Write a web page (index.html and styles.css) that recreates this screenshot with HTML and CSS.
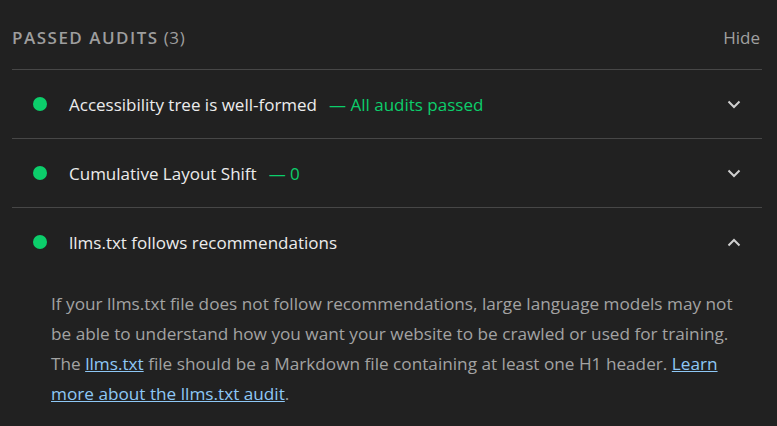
FILE: index.html
```html
<!DOCTYPE html>
<html lang="en">
<head>
<meta charset="utf-8">
<title>Passed audits</title>
<link rel="stylesheet" href="styles.css">
</head>
<body>
<section class="group">
  <header class="group-header">
    <h2 class="group-title"><span class="caps">Passed audits</span> <span class="count">(3)</span></h2>
    <button class="hide-btn" type="button">Hide</button>
  </header>
  <div class="audit">
    <div class="audit-row">
      <span class="dot"></span>
      <span class="audit-title">Accessibility tree is well-formed</span>
      <span class="audit-value">— All audits passed</span>
      <svg class="chev" viewBox="0 0 14 9" width="14" height="9"><path d="M1.5 1.5 L7 7 L12.5 1.5" fill="none" stroke="#cfcfcf" stroke-width="2"/></svg>
    </div>
  </div>
  <div class="audit">
    <div class="audit-row">
      <span class="dot"></span>
      <span class="audit-title">Cumulative Layout Shift</span>
      <span class="audit-value">— 0</span>
      <svg class="chev" viewBox="0 0 14 9" width="14" height="9"><path d="M1.5 1.5 L7 7 L12.5 1.5" fill="none" stroke="#cfcfcf" stroke-width="2"/></svg>
    </div>
  </div>
  <div class="audit open">
    <div class="audit-row">
      <span class="dot"></span>
      <span class="audit-title">llms.txt follows recommendations</span>
      <svg class="chev" viewBox="0 0 14 9" width="14" height="9"><path d="M1.5 7.5 L7 2 L12.5 7.5" fill="none" stroke="#cfcfcf" stroke-width="2"/></svg>
    </div>
    <p class="audit-desc">If your llms.txt file does not follow recommendations, large language models may not be able to understand how you want your website to be crawled or used for training. The <a href="#">llms.txt</a> file should be a Markdown file containing at least one H1 header. <a href="#">Learn more about the llms.txt audit</a>.</p>
  </div>
</section>
</body>
</html>
```
FILE: styles.css
```css
html, body {
  margin: 0;
  padding: 0;
  background: #212121;
}
body {
  font-family: "Open Sans", "Noto Sans", sans-serif;
  color: #e6e6e6;
  width: 777px;
  height: 426px;
  overflow: hidden;
}
.group {
  padding: 0 15px 0 12px;
}
.group-header {
  display: flex;
  align-items: center;
  justify-content: space-between;
  height: 70px;
  padding-top: 5px;
  box-sizing: border-box;
  border-bottom: 1px solid #474747;
}
.group-title {
  margin: 0;
  font-size: 17px;
  font-weight: 400;
  color: #9e9e9e;
  letter-spacing: 0.6px;
}
.caps {
  text-transform: uppercase;
  font-weight: 600;
  letter-spacing: 1.5px;
}
.count {
  font-weight: 400;
}
.hide-btn {
  background: none;
  border: 0;
  padding: 0 2px 0 0;
  font: inherit;
  font-size: 17px;
  color: #a0a0a0;
}
.audit {
  border-bottom: 1px solid #474747;
}
.audit-row {
  display: flex;
  align-items: center;
  height: 68px;
  padding-left: 21px;
  padding-right: 21px;
}
.dot {
  width: 14px;
  height: 14px;
  border-radius: 50%;
  background: #0cce6b;
  flex: none;
  margin-right: 22px;
}
.audit-title {
  font-size: 17px;
  color: #ececec;
}
.audit-value {
  font-size: 17px;
  color: #0cce6b;
  margin-left: 12px;
}
.chev {
  margin-left: auto;
  flex: none;
}
.open {
  border-bottom: 0;
}
.audit-desc {
  margin: 0;
  padding: 13px 16px 0 39px;
  font-size: 17.2px;
  line-height: 30px;
  color: #a3a3a3;
}
.audit-desc a {
  color: #8ec8f6;
  text-decoration: underline;
}
```
